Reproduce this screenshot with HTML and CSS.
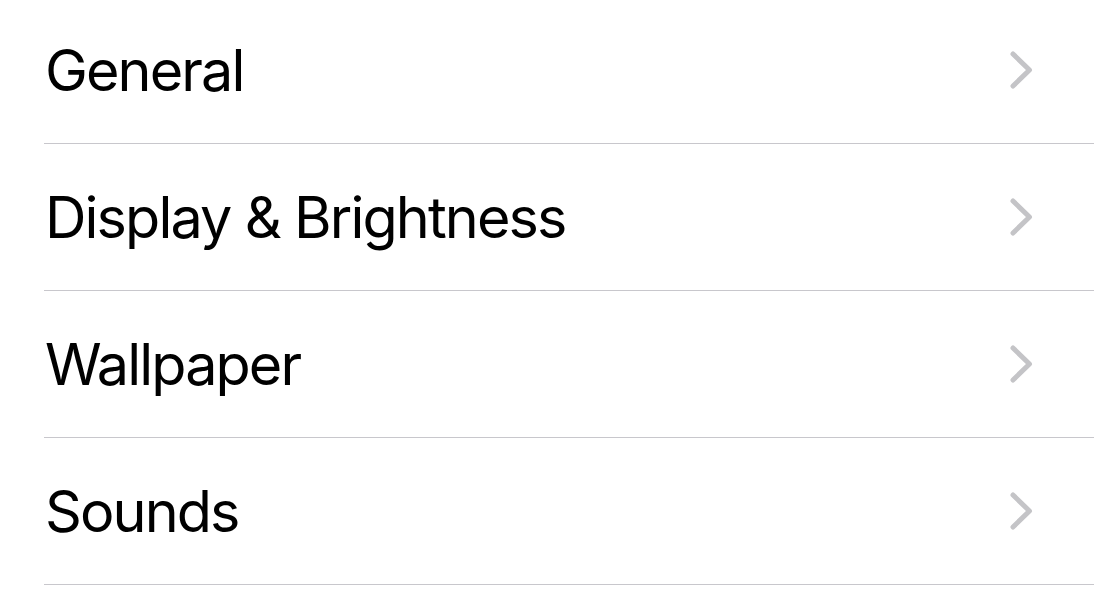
FILE: index.html
```html
<!DOCTYPE html>
<html>
<head>
<meta charset="utf-8">
<link rel="stylesheet" href="styles.css">
</head>
<body>
<ul class="list">
  <li class="row"><span class="label">General</span><svg class="chev" viewBox="0 0 23 38"><path d="M3 3 L19.5 19 L3 35"/></svg></li>
  <li class="row"><span class="label">Display &amp; Brightness</span><svg class="chev" viewBox="0 0 23 38"><path d="M3 3 L19.5 19 L3 35"/></svg></li>
  <li class="row"><span class="label">Wallpaper</span><svg class="chev" viewBox="0 0 23 38"><path d="M3 3 L19.5 19 L3 35"/></svg></li>
  <li class="row"><span class="label">Sounds</span><svg class="chev" viewBox="0 0 23 38"><path d="M3 3 L19.5 19 L3 35"/></svg></li>
</ul>
</body>
</html>
```
FILE: styles.css
```css
html, body {
  margin: 0;
  padding: 0;
  background: #ffffff;
}
.list {
  list-style: none;
  margin: -3px 0 0 44px;
  padding: 0;
}
.row {
  display: flex;
  align-items: center;
  justify-content: space-between;
  height: 146px;
  border-bottom: 1px solid #c8c7cc;
  padding-right: 61px;
}
.label {
  font-family: Inter, "Noto Sans", sans-serif;
  font-size: 57.5px;
  color: #000000;
  letter-spacing: -1.9px;
  padding-left: 1px;
}
.chev {
  width: 23px;
  height: 38px;
  fill: none;
  stroke: #c4c4c7;
  stroke-width: 5;
  stroke-linecap: round;
  stroke-linejoin: round;
}
```
